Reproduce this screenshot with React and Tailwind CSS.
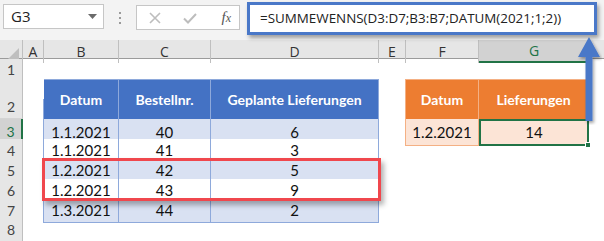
import React from 'react';

const COLS = 'grid grid-cols-[23px_21px_75px_92px_168px_27px_73px_110px_1fr]';

const blueHead = 'bg-[#4472c4] text-white text-[14px] font-bold border-r border-[#8ea9db] flex items-center justify-center';
const blueOdd = 'bg-[#d9e1f2] border-r border-b border-[#8ea9db] flex items-center justify-center';
const blueEven = 'bg-white border-r border-b border-[#8ea9db] flex items-center justify-center';
const orHead = 'bg-[#ed7d31] text-white text-[14px] font-bold border-r border-[#f4b084] flex items-center justify-center';
const orCell = 'bg-[#fce4d6] border-r border-b border-[#f4b084] flex items-center justify-center';

const blueRows = [
  ['1.1.2021', '40', '6'],
  ['1.1.2021', '41', '3'],
  ['1.2.2021', '42', '5'],
  ['1.2.2021', '43', '9'],
  ['1.3.2021', '44', '2'],
];

const RowHead = ({ n, selected, tall }) => (
  <div
    className={`border-b border-[#d4d4d4] flex justify-center text-[14px] ${tall ? 'items-end pb-[1px]' : 'items-center'} ${
      selected ? 'bg-[#d2d2d2] text-[#217346] border-r-2 border-r-[#217346]' : 'bg-[#e6e6e6] text-[#444] border-r border-r-[#bfbfbf]'
    }`}
  >
    {n}
  </div>
);

const TopBar = () => (
  <div className="h-[40px] bg-[#f3f3f3] flex items-start pt-[4px] pl-[3px] relative">
    <div className="w-[101px] h-[25px] bg-white border border-[#c6c6c6] flex items-center justify-between pl-[7px] pr-[6px] text-[15px] text-[#222]">
      <span>G3</span>
      <svg width="9" height="5" viewBox="0 0 9 5"><path d="M0 0h9L4.5 5z" fill="#6b6b6b" /></svg>
    </div>
    <div className="w-[32px] flex flex-col items-center gap-[3px] pt-[8px]">
      <span className="w-[2px] h-[2px] bg-[#9a9a9a]" />
      <span className="w-[2px] h-[2px] bg-[#9a9a9a]" />
      <span className="w-[2px] h-[2px] bg-[#9a9a9a]" />
    </div>
    <div className="w-[104px] h-[25px] mt-[1px] bg-white border border-[#c6c6c6] flex items-center pl-[10px] pr-[8px]">
      <svg width="14" height="14" viewBox="0 0 14 14" className="ml-[1px]">
        <path d="M2 2l10 10M12 2L2 12" stroke="#bdbdbd" strokeWidth="1.6" />
      </svg>
      <svg width="16" height="14" viewBox="0 0 16 14" className="ml-[20px]">
        <path d="M2 7.5l4 4L14 3" stroke="#bdbdbd" strokeWidth="2" fill="none" />
      </svg>
      <span className="ml-auto italic text-[#555] text-[15px] leading-none" style={{ fontFamily: '"Liberation Serif", serif' }}>
        f<span className="text-[12px]">x</span>
      </span>
    </div>
    <div className="absolute left-[247px] top-[2px] w-[350px] h-[33px] bg-white border-[3px] border-[#4a78c8] shadow-[2px_3px_4px_rgba(0,0,0,0.35)] flex items-center pl-[10px] text-[13.4px] text-[#222]">
      =SUMMEWENNS(D3:D7;B3:B7;DATUM(2021;1;2))
    </div>
  </div>
);

const ColHeader = () => {
  const letters = ['A', 'B', 'C', 'D', 'E', 'F', 'G'];
  return (
    <div className={`${COLS} h-[19px] bg-[#e6e6e6] border-b border-[#9b9b9b] text-[14px] text-[#333]`}>
      <div className="border-r border-[#bfbfbf] flex items-end justify-end pr-[3px] pb-[2px]">
        <svg width="13" height="13" viewBox="0 0 13 13"><path d="M13 0v13H0z" fill="#bfbfbf" /></svg>
      </div>
      {letters.map((l) => (
        <div
          key={l}
          className={`flex items-center justify-center ${
            l === 'G' ? 'bg-[#d2d2d2] text-[#217346] border-b-2 border-[#217346]' : 'border-r border-[#bfbfbf]'
          }`}
        >
          {l}
        </div>
      ))}
      <div />
    </div>
  );
};

export default function App() {
  return (
    <div className="w-[604px] h-[241px] overflow-hidden bg-white relative" style={{ fontFamily: '"Open Sans", "Noto Sans", sans-serif' }}>
      <TopBar />
      <ColHeader />
      <div className="text-[15px] text-[#111]" style={{ fontFamily: 'Lato, "Open Sans", sans-serif' }}>
        {/* row 1 */}
        <div className={`${COLS} h-[20px]`}>
          <RowHead n="1" />
        </div>
        {/* row 2: table headers */}
        <div className={`${COLS} h-[40px]`}>
          <RowHead n="2" tall />
          <div className="pt-[20px]"><div className="h-full border-r border-[#8ea9db]" /></div>
          <div className={`${blueHead} border-t border-t-[#8ea9db]`}>Datum</div>
          <div className={`${blueHead} border-t border-t-[#8ea9db]`}>Bestellnr.</div>
          <div className={`${blueHead} border-t border-t-[#8ea9db]`}>Geplante Lieferungen</div>
          <div className="border-r border-[#f4b084]" />
          <div className={`${orHead} border-t border-t-[#f4b084]`}>Datum</div>
          <div className={`${orHead} border-t border-t-[#f4b084]`}>Lieferungen</div>
          <div />
        </div>
        {blueRows.map((r, i) => {
          const cls = i % 2 === 0 ? blueOdd : blueEven;
          return (
            <div key={i} className={`${COLS} h-[20px]`}>
              <RowHead n={String(i + 3)} selected={i === 0} />
              <div className="border-r border-[#8ea9db]" />
              <div className={cls}>{r[0]}</div>
              <div className={cls}>{r[1]}</div>
              <div className={cls}>{r[2]}</div>
              {i === 0 ? (
                <>
                  <div className="border-r border-[#f4b084]" />
                  <div className={orCell}>1.2.2021</div>
                  <div className="relative bg-[#fce4d6] border-2 border-[#217346] flex items-center justify-center">
                    14
                    <span className="absolute -right-[4px] -bottom-[4px] w-[6px] h-[6px] bg-[#217346] border border-white" />
                  </div>
                </>
              ) : null}
            </div>
          );
        })}
        <div className={`${COLS} h-[20px]`}>
          <RowHead n="8" />
        </div>
        <div className={`${COLS} h-[20px]`}>
          <RowHead n="" />
        </div>
      </div>

      {/* red highlight around rows 5-6 */}
      <div className="absolute left-[42px] top-[158px] w-[339px] h-[43px] border-[3px] border-[#f0474d] shadow-[3px_4px_5px_rgba(0,0,0,0.3)]" />

      {/* arrow pointing up to formula */}
      <svg className="absolute left-[576px] top-[35px]" width="26" height="90" viewBox="0 0 26 90">
        <defs>
          <filter id="sh" x="-50%" y="-20%" width="200%" height="140%">
            <feDropShadow dx="1.5" dy="2" stdDeviation="1.5" floodOpacity="0.35" />
          </filter>
        </defs>
        <path d="M13 2L24 22H16.5V86H9.5V22H2Z" fill="#4a78c8" filter="url(#sh)" />
      </svg>
    </div>
  );
}
